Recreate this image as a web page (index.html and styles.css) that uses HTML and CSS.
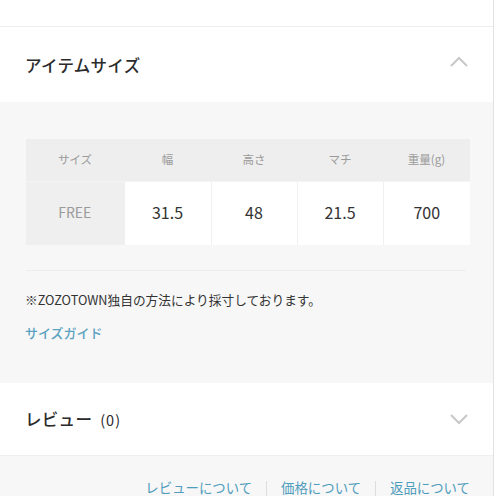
FILE: index.html
```html
<!DOCTYPE html>
<html lang="ja">
<head>
<meta charset="utf-8">
<link rel="stylesheet" href="styles.css">
</head>
<body>
<div class="wrap">
  <div class="top"></div>
  <div class="acc-head">
    <h2 class="acc-title">アイテムサイズ</h2>
    <svg class="chev" width="20" height="12" viewBox="0 0 20 12"><path d="M2 10 L10 2 L18 10" fill="none" stroke="#c8c8c8" stroke-width="2"/></svg>
  </div>
  <div class="acc-body">
    <table class="size-table">
      <tr class="head-row">
        <th>サイズ</th><th>幅</th><th>高さ</th><th>マチ</th><th>重量(g)</th>
      </tr>
      <tr class="val-row">
        <td class="size-name">FREE</td><td>31.5</td><td>48</td><td>21.5</td><td>700</td>
      </tr>
    </table>
    <div class="rule"></div>
    <p class="note">※ZOZOTOWN独自の方法により採寸しております。</p>
    <a class="guide">サイズガイド</a>
  </div>
  <div class="acc-head review">
    <h2 class="acc-title">レビュー<span class="count">(0)</span></h2>
    <svg class="chev" width="20" height="12" viewBox="0 0 20 12"><path d="M2 2 L10 10 L18 2" fill="none" stroke="#c8c8c8" stroke-width="2"/></svg>
  </div>
  <div class="footer">
    <a class="flink">レビューについて</a><span class="sep"></span><a class="flink">価格について</a><span class="sep"></span><a class="flink">返品について</a>
  </div>
</div>
</body>
</html>
```

FILE: styles.css
```css
html, body {
  margin: 0;
  padding: 0;
  background: #fff;
  font-family: "Noto Sans CJK JP", "Noto Sans", sans-serif;
  color: #333;
}
.wrap {
  width: 493px;
  height: 496px;
  border-right: 1px solid #e2e2e2;
  overflow: hidden;
  background: #f7f7f7;
}
.top {
  height: 26px;
  background: #fff;
  border-bottom: 1px solid #eeeeee;
}
.acc-head {
  height: 75px;
  background: #fff;
  display: flex;
  align-items: center;
  justify-content: space-between;
  padding: 0 24px 0 25px;
}
.acc-title {
  margin: 0;
  font-size: 16.5px;
  font-weight: 500;
  color: #2b2b2b;
  letter-spacing: 0.3px;
}
.chev {
  display: block;
  margin-top: -6px;
}
.review .chev {
  margin-top: 0;
}
.count {
  font-size: 14.5px;
  font-weight: 400;
  margin-left: 8px;
  letter-spacing: 1px;
}
.acc-body {
  background: #f7f7f7;
  padding: 37px 23px 0 26px;
  box-sizing: border-box;
  height: 281px;
}
.size-table {
  width: 444px;
  border-collapse: collapse;
  table-layout: fixed;
}
.size-table th,
.size-table td {
  text-align: center;
  padding: 0;
}
.head-row th {
  height: 39px;
  background: #eeeeee;
  font-size: 11.5px;
  font-weight: 400;
  color: #9a9a9a;
  padding-bottom: 3px;
}
.head-row th:first-child { width: 98px; }
.head-row th:nth-child(2) { width: 87px; }
.head-row th:nth-child(3) { width: 86px; }
.head-row th:nth-child(4) { width: 86px; }
.val-row td {
  height: 60px;
  background: #fff;
  font-size: 16px;
  font-weight: 400;
  color: #333;
  border-left: 1px solid #f0f0f0;
  border-top: 1px solid #f4f4f4;
  padding-bottom: 3px;
}
.val-row td.size-name {
  background: #efefef;
  color: #9a9a9a;
  font-size: 14px;
  border-left: none;
}
.rule {
  margin-top: 25px;
  margin-right: 4px;
  border-top: 1px solid #ededed;
}
.note {
  margin: 20px 0 0 -1px;
  font-size: 12.7px;
  line-height: 18px;
  color: #333;
}
.guide {
  display: block;
  margin-top: 15px;
  font-size: 13px;
  font-weight: 500;
  color: #5aa2c0;
  line-height: 18px;
  margin-left: -1px;
}
.review {
  height: 72px;
  border-bottom: 1px solid #efefef;
}
.footer {
  display: flex;
  justify-content: flex-end;
  align-items: center;
  padding: 21px 23px 0 0;
}
.flink {
  font-size: 13.4px;
  color: #4f9dbd;
  line-height: 18px;
}
.sep {
  width: 1px;
  height: 16px;
  background: #dddddd;
  margin: 4px 14px 0 14px;
}
```
